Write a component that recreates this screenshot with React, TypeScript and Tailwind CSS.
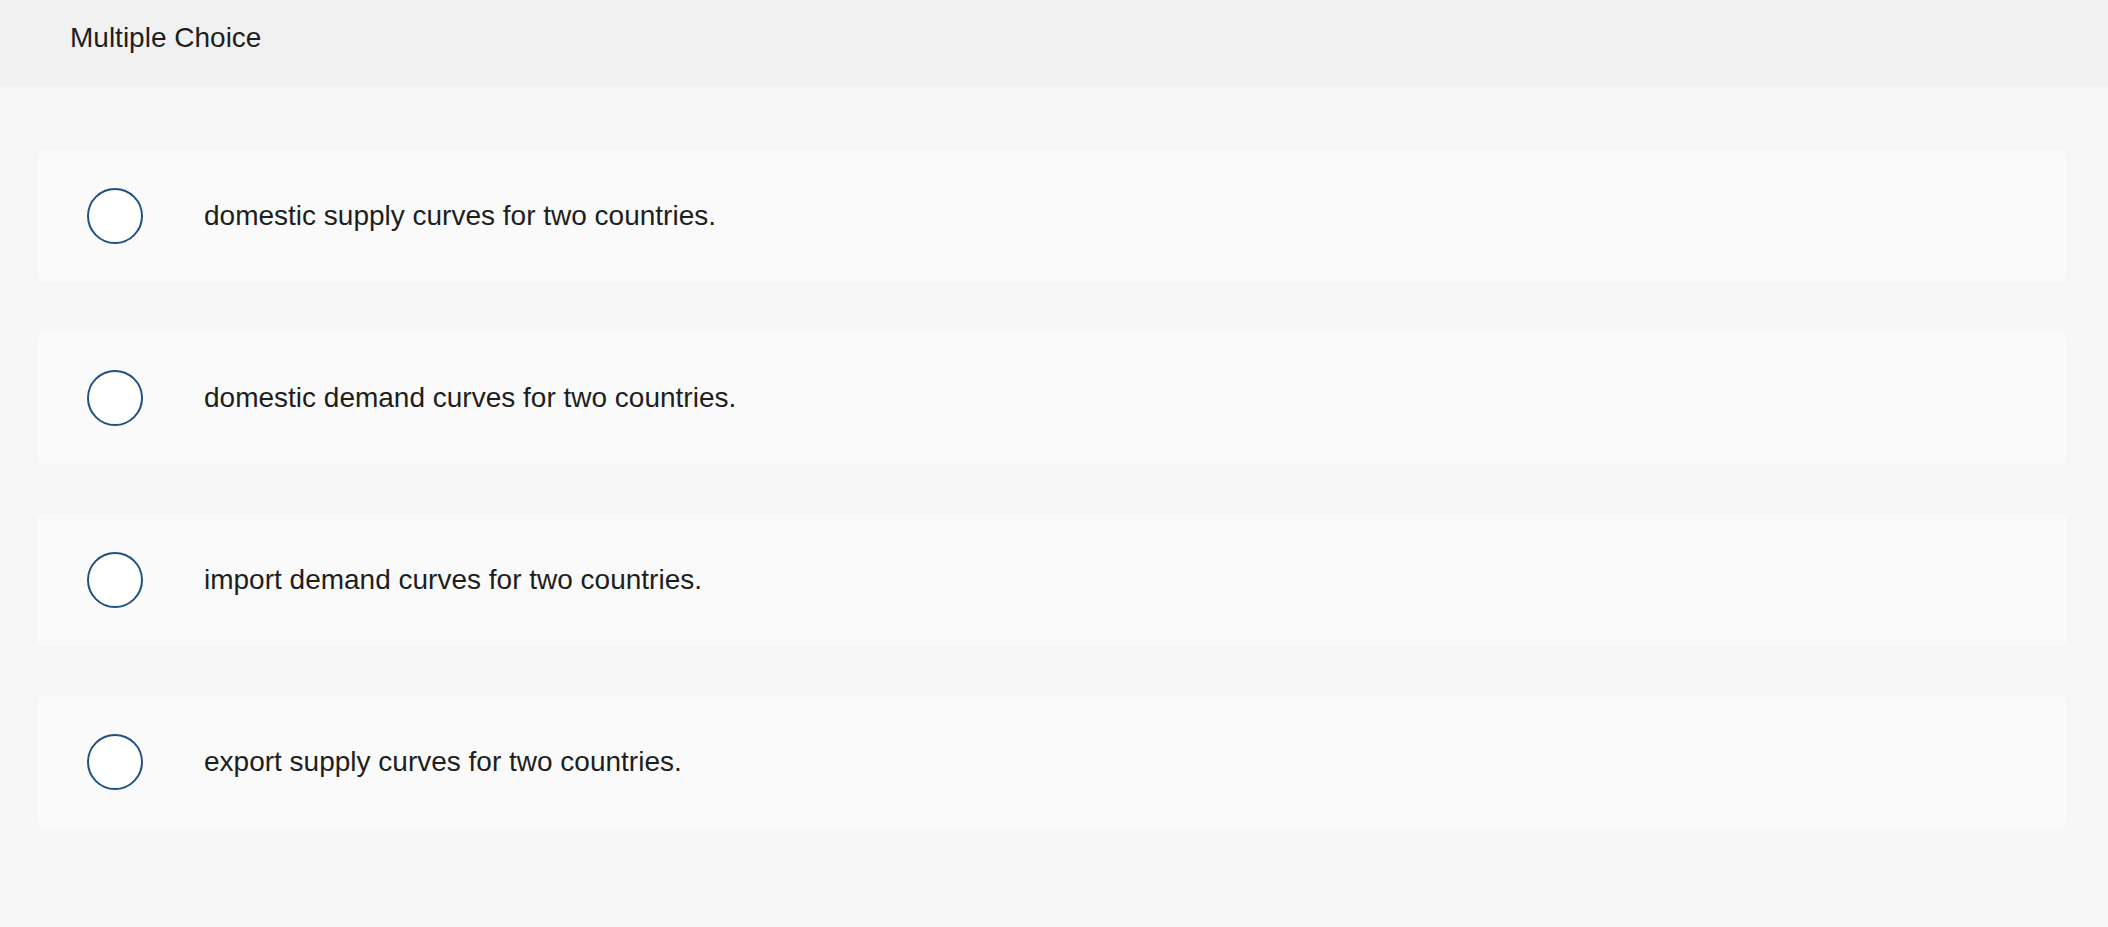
const options = [
  "domestic supply curves for two countries.",
  "domestic demand curves for two countries.",
  "import demand curves for two countries.",
  "export supply curves for two countries.",
];

export default function App() {
  return (
    <div
      className="min-h-[927px] bg-[#f6f6f6] text-[#1e1e1e]"
      style={{ fontFamily: '"Liberation Sans", Arial, sans-serif' }}
    >
      <header className="h-[86px] bg-[#f1f1f1] pl-[70px] pt-[22px]">
        <h1 className="text-[28px] leading-[32px] font-normal">Multiple Choice</h1>
      </header>
      <main className="flex flex-col gap-[50px] pt-[64px] pl-[37px] pr-[41px]">
        {options.map((label) => (
          <label
            key={label}
            className="flex h-[132px] cursor-pointer items-center rounded-[6px] bg-[#fafafa] pl-[50px]"
          >
            <span className="h-[56px] w-[56px] shrink-0 rounded-full border-2 border-[#1f5283] bg-white" />
            <span className="ml-[61px] text-[28px] leading-[32px]">{label}</span>
          </label>
        ))}
      </main>
    </div>
  );
}
